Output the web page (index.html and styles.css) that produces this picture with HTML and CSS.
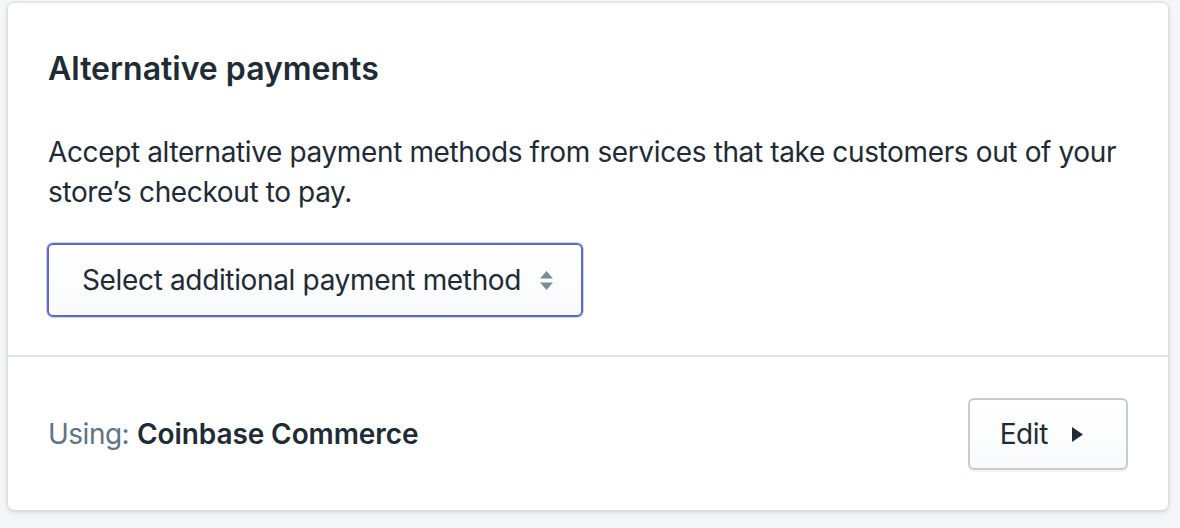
FILE: index.html
```html
<!DOCTYPE html>
<html lang="en">
<head>
<meta charset="utf-8">
<title>Alternative payments</title>
<link rel="stylesheet" href="styles.css">
</head>
<body>
<div class="card">
  <div class="section">
    <h2 class="heading">Alternative payments</h2>
    <p class="text">Accept alternative payment methods from services that take customers out of your store’s checkout to pay.</p>
    <div class="select">
      <span class="select-label">Select additional payment method</span>
      <svg class="select-icon" width="13" height="19" viewBox="0 0 13 19" aria-hidden="true">
        <path d="M6.5 0 L13 7.5 L0 7.5 Z" />
        <path d="M0 11.5 L13 11.5 L6.5 19 Z" />
      </svg>
    </div>
  </div>
  <div class="section section-footer">
    <div class="using"><span class="using-label">Using:</span> <strong class="using-name">Coinbase Commerce</strong></div>
    <button class="button" type="button">
      <span class="button-label">Edit</span>
      <span class="button-icon">
        <svg width="11" height="15" viewBox="0 0 11 15" aria-hidden="true">
          <path d="M0 0 L11 7.5 L0 15 Z" />
        </svg>
      </span>
    </button>
  </div>
</div>
</body>
</html>
```
FILE: styles.css
```css
html, body {
  margin: 0;
  background: #f4f6f8;
}

body {
  padding: 3px 12px 18px 8px;
  font-family: "Inter", "Noto Sans", sans-serif;
  color: #212b36;
}

.card {
  background: #ffffff;
  border-radius: 6px;
  box-shadow: 0 0 0 2px rgba(63, 63, 68, 0.05), 0 2px 6px 0 rgba(63, 63, 68, 0.15);
}

.section {
  padding: 40px 40px 38px 40px;
}

.heading {
  margin: 0;
  font-size: 32px;
  line-height: 52px;
  font-weight: 600;
  color: #212b36;
}

.text {
  margin: 37px 0 0 0;
  font-size: 28px;
  line-height: 40px;
  letter-spacing: -0.37px;
  color: #212b36;
}

.select {
  margin-top: 31px;
  margin-left: -1px;
  box-sizing: border-box;
  width: 536px;
  height: 74px;
  display: flex;
  align-items: center;
  justify-content: space-between;
  padding: 0 28px 0 33px;
  border: 2px solid #5c6ac4;
  border-radius: 6px;
  background: linear-gradient(180deg, #ffffff, #f9fafb);
  box-shadow: 0 0 0 1px rgba(92, 106, 196, 0.3);
}

.select-label {
  font-size: 28px;
  line-height: 40px;
  letter-spacing: -0.35px;
  color: #212b36;
}

.select-icon {
  flex-shrink: 0;
  fill: #798c9c;
}

.section-footer {
  border-top: 2px solid #dfe3e8;
  padding: 41px 40px 40px 40px;
  display: flex;
  align-items: center;
  justify-content: space-between;
}

.using {
  font-size: 28px;
  line-height: 40px;
}

.using-label {
  color: #637381;
  letter-spacing: -0.5px;
}

.using-name {
  font-weight: 600;
  color: #212b36;
  letter-spacing: -0.1px;
}

.button {
  box-sizing: border-box;
  height: 72px;
  display: flex;
  align-items: center;
  padding: 0 29px 0 30px;
  border: 2px solid #c4cdd5;
  border-radius: 6px;
  background: linear-gradient(180deg, #ffffff, #f9fafb);
  box-shadow: 0 2px 0 0 rgba(22, 29, 37, 0.05);
  font-family: "Inter", "Noto Sans", sans-serif;
  color: #212b36;
  cursor: pointer;
}

.button-label {
  font-size: 28px;
  line-height: 40px;
  letter-spacing: -0.4px;
}

.button-icon {
  width: 40px;
  height: 40px;
  margin-left: 9px;
  display: flex;
  align-items: center;
  justify-content: center;
}

.button-icon svg {
  flex-shrink: 0;
  fill: #212b36;
}
```
